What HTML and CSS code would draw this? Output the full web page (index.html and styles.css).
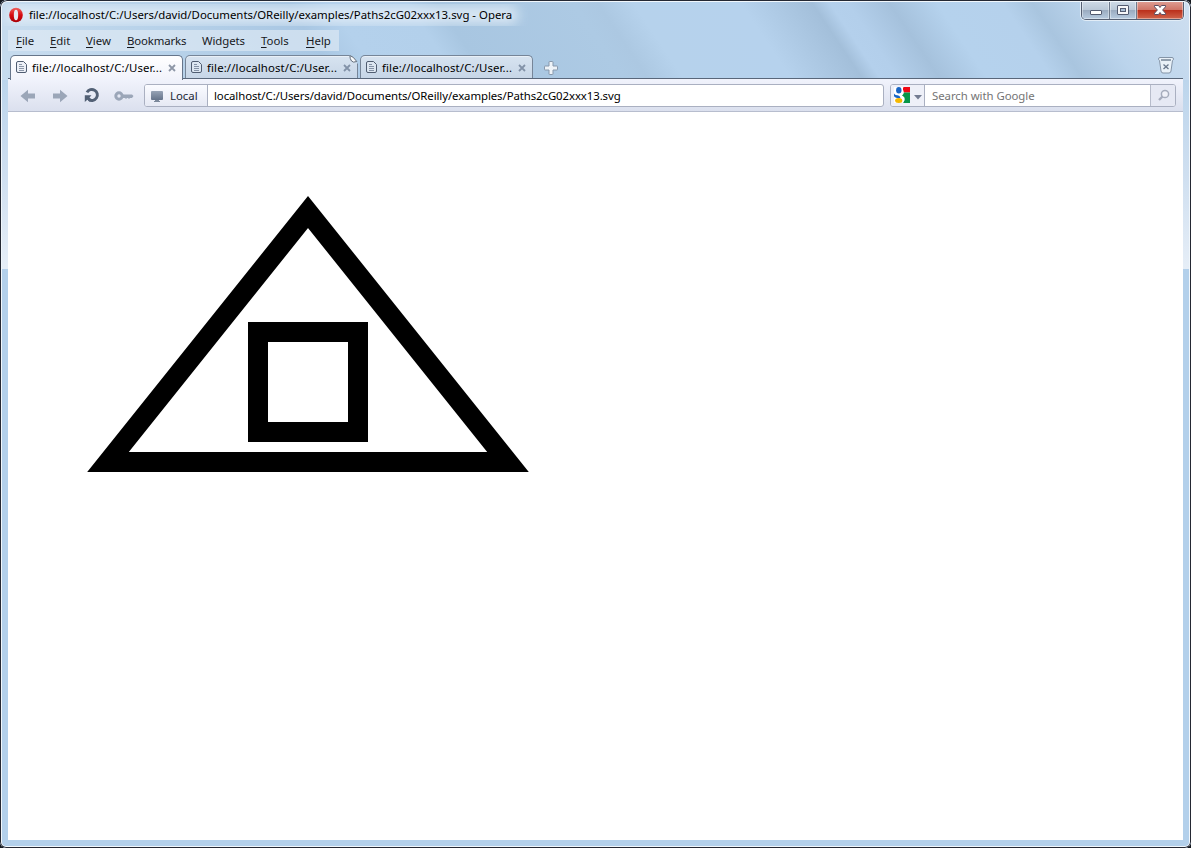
FILE: index.html
```html
<!DOCTYPE html>
<html lang="en">
<head>
<meta charset="utf-8">
<title>Paths2cG02xxx13.svg - Opera</title>
<link rel="stylesheet" href="styles.css">
</head>
<body>
<div class="window">
  <svg class="glass" width="1191" height="848" aria-hidden="true">
    <defs>
      <linearGradient id="streaks" gradientUnits="userSpaceOnUse" x1="0" y1="0" x2="1191" y2="0" gradientTransform="matrix(1 0 .67 1 0 0)">
        <stop offset="0" stop-color="#c6dbee"/>
        <stop offset=".1" stop-color="#b9d3ea"/>
        <stop offset=".24" stop-color="#a9c7e3"/>
        <stop offset=".275" stop-color="#b4d1ec"/>
        <stop offset=".34" stop-color="#b3d0eb"/>
        <stop offset=".365" stop-color="#a8c6e1"/>
        <stop offset=".48" stop-color="#adcae4"/>
        <stop offset=".5" stop-color="#acc8e2"/>
        <stop offset=".53" stop-color="#b6d2ec"/>
        <stop offset=".62" stop-color="#b6d2ed"/>
        <stop offset=".68" stop-color="#a3bfda"/>
        <stop offset=".695" stop-color="#b4d0ec"/>
        <stop offset=".71" stop-color="#b3cfeb"/>
        <stop offset=".745" stop-color="#a5c1dc"/>
        <stop offset=".785" stop-color="#b5d2ed"/>
        <stop offset=".84" stop-color="#b5d1ec"/>
        <stop offset=".865" stop-color="#a9c5df"/>
        <stop offset=".91" stop-color="#bbd4ec"/>
        <stop offset="1" stop-color="#cfdff0"/>
      </linearGradient>
      <linearGradient id="side" x1="0" y1="0" x2="0" y2="1">
        <stop offset="0" stop-color="#bcd5ec"/><stop offset=".5" stop-color="#cfdff0"/><stop offset="1" stop-color="#e6eef7"/>
      </linearGradient>
      <filter id="soft"><feGaussianBlur stdDeviation="6"/></filter>
    </defs>
    <rect width="1191" height="848" fill="#b3d0eb"/>
    <rect width="1191" height="80" fill="url(#streaks)"/>
    <rect y="80" width="8" height="189" fill="url(#side)"/>
    <rect x="1183" y="80" width="8" height="189" fill="url(#side)"/>
    <rect x="6" y="6" width="512" height="18" rx="7" fill="#e5eff8" opacity=".8" filter="url(#soft)"/>
  </svg>

  <header class="title-bar">
    <svg class="logo" width="16" height="16" viewBox="0 0 16 16">
      <defs><linearGradient id="red" x2="0" y2="1"><stop stop-color="#f1625d"/><stop offset=".5" stop-color="#d60b11"/><stop offset="1" stop-color="#a90006"/></linearGradient></defs>
      <ellipse cx="8" cy="8" rx="6.800" ry="7.300" fill="url(#red)"/>
      <ellipse cx="8" cy="8" rx="2.200" ry="5.300" fill="#e6e9f2"/>
    </svg>
    <span class="title">file://localhost/C:/Users/david/Documents/OReilly/examples/Paths2cG02xxx13.svg - Opera</span>
    <div class="controls">
      <span class="control"><svg width="14" height="12"><rect x="1.500" y="6.500" width="11" height="4" rx=".5" fill="#fff" stroke="#535b70"/></svg></span>
      <span class="control"><svg width="14" height="12"><rect x="1.500" y="1.500" width="11" height="9" rx=".5" fill="#f6f6f8" stroke="#535b70"/><rect x="4.500" y="4.500" width="5" height="3" fill="#a9bdd4" stroke="#535b70"/></svg></span>
      <span class="control close"><svg width="14" height="12"><path d="M1.500 1.500h4L7 3.500l1.500-2h4v1.300L9.600 6l2.900 3.200v1.300h-4L7 8.500l-1.500 2h-4V9.200L4.400 6 1.500 2.800z" fill="#fff" stroke="#5c4e62"/></svg></span>
    </div>
  </header>

  <nav class="menu">
    <span class="m-file"><u>F</u>ile</span><span class="m-edit"><u>E</u>dit</span><span class="m-view"><u>V</u>iew</span><span class="m-book"><u>B</u>ookmarks</span><span class="m-widg">Widgets</span><span class="m-tool"><u>T</u>ools</span><span class="m-help"><u>H</u>elp</span>
  </nav>

  <div class="tabs">
    <div class="tab active">
      <svg class="page-icon" width="13" height="14"><path d="M1.500 3q0-1.500 1.500-1.500h5.500l3 3V11q0 1.500-1.500 1.500H3Q1.500 12.500 1.500 11z" fill="#edf0f7" stroke="#505d71"/><path d="M4 4.500h3M4 6.500h5M4 8.500h5M4 10.500h5" stroke="#8c97a9"/></svg>
      <span class="tab-text">file://localhost/C:/User...</span>
      <svg class="x" width="8" height="8"><path d="M1 1l6 6M7 1L1 7" stroke="#8e97a7" stroke-width="1.800"/></svg>
    </div>
    <div class="tab">
      <svg class="page-icon" width="13" height="14"><path d="M1.500 3q0-1.500 1.500-1.500h5.500l3 3V11q0 1.500-1.500 1.500H3Q1.500 12.500 1.500 11z" fill="#dce6f1" stroke="#505d71"/><path d="M4 4.500h3M4 6.500h5M4 8.500h5M4 10.500h5" stroke="#8492a6"/></svg>
      <span class="tab-text">file://localhost/C:/User...</span>
      <svg class="x" width="8" height="8"><path d="M1 1l6 6M7 1L1 7" stroke="#8292a8" stroke-width="1.800"/></svg>
      <svg class="fold" width="9" height="9"><path d="M0 0h9v9z" fill="#b1cfe9"/><path d="M.8.500Q4 1 7.800 6.500 4 8 2.500 6T.8.500z" fill="#f8fafc" stroke="#626d7b"/></svg>
    </div>
    <div class="tab">
      <svg class="page-icon" width="13" height="14"><path d="M1.500 3q0-1.500 1.500-1.500h5.500l3 3V11q0 1.500-1.500 1.500H3Q1.500 12.500 1.500 11z" fill="#dce6f1" stroke="#505d71"/><path d="M4 4.500h3M4 6.500h5M4 8.500h5M4 10.500h5" stroke="#8492a6"/></svg>
      <span class="tab-text">file://localhost/C:/User...</span>
      <svg class="x" width="8" height="8"><path d="M1 1l6 6M7 1L1 7" stroke="#8292a8" stroke-width="1.800"/></svg>
    </div>
    <svg class="add" width="14" height="14"><path d="M5.500.500h3q.5 0 .5.500v4h4q.5 0 .5.500v3q0 .5-.5.500H9v4q0 .5-.5.500h-3q-.5 0-.5-.5V9H1Q.5 9 .5 8.500v-3Q.5 5 1 5h4V1q0-.5.500-.5z" fill="#eef3f8" stroke="#8798ac"/></svg>
    <svg class="trash" width="18" height="18"><path d="M3 .500h12q1.500 0 1.500 1.500 0 1-1 1.500L14 14q-.3 2-2 2H6q-1.700 0-2-2L2.500 3.500q-1-.5-1-1.500 0-1.500 1.500-1.500z" fill="#e9f1f8" stroke="#8494a7"/><path d="M4 3h10" stroke="#758497" stroke-width="1.500"/><path d="M6.500 7.500l5 4.500m0-4.500l-5 4.500" stroke="#68778b" stroke-width="1.300"/></svg>
  </div>

  <div class="toolbar">
    <svg class="nav-icon back" width="16" height="14"><path d="M.5 7L8 .8v3.700h7v5H8v3.700z" fill="#9ba6b8"/></svg>
    <svg class="nav-icon forward" width="16" height="14"><path d="M15.500 7L8 .8v3.700H1v5h7v3.700z" fill="#9ba6b8"/></svg>
    <svg class="nav-icon reload" width="16" height="16"><path d="M3 5.400A5.500 5.500 0 1 1 4.800 12.500" fill="none" stroke="#526075" stroke-width="2.900"/><path d="M.8 8.300h6.700L5.500 10.500l2 2-1.500 2.200-2.700-2L.8 15z" fill="#526075"/></svg>
    <svg class="nav-icon key" width="20" height="12"><path d="M8 4.500h10l1.500 1.500L18 8h-2l-1 1-1-1h-1l-1 1-1-1H8z" fill="#9ba6b8"/><circle cx="5" cy="6" r="3.200" fill="none" stroke="#9ba6b8" stroke-width="3"/></svg>
    <div class="address">
      <div class="local"><svg width="14" height="12"><defs><linearGradient id="monitor" x2="0" y2="1"><stop stop-color="#97a3b5"/><stop offset="1" stop-color="#65748a"/></linearGradient></defs><rect x="1" y="0" width="12" height="9" rx="1" fill="url(#monitor)"/><path d="M5 9h4v1h1v1H4v-1h1z" fill="#7c899c"/></svg><span class="local-text">Local</span></div>
      <span class="url">localhost/C:/Users/david/Documents/OReilly/examples/Paths2cG02xxx13.svg</span>
    </div>
    <div class="search">
      <div class="engine">
        <svg width="16" height="16"><path d="M0 0h16v16H0z" fill="#fff"/><path d="M9 0h7v5.500H9z" fill="#f00814"/><path d="M16 5.500V16H9l1-4-3-4 2.500-2.500z" fill="#079647"/><ellipse cx="4.800" cy="3.300" rx="2.700" ry="3.300" fill="#1765c5"/><path d="M0 6.500q1 2 3.500 1.700Q6 8.300 6.500 11 1 11.500 0 9z" fill="#1765c5"/><ellipse cx="4.800" cy="13.500" rx="3.700" ry="2.500" fill="#f5b800"/><path d="M7.500 0h2Q8 2 9.500 4q1 2.500-1.500 4.500 3.500 1.500 2.500 5L9 16H8q1.500-3-.8-5Q5.500 8.800 7.800 6 9 3.500 7.500 0z" fill="#fff"/></svg>
        <svg width="8" height="5"><path d="M0 0h8L4 4.500z" fill="#737c91"/></svg>
      </div>
      <span class="query">Search with Google</span>
      <div class="go"><svg width="14" height="14"><circle cx="8" cy="5" r="3.600" fill="#f0f1f8" stroke="#a6acbc" stroke-width="1.500"/><path d="M5.500 7.500L2 11" stroke="#a6acbc" stroke-width="2.300"/></svg></div>
    </div>
  </div>

  <main class="page">
    <svg width="1175" height="728"><g fill="none" stroke="#000" stroke-width="20"><path d="M100 350L300 100 500 350z"/><path d="M250 220h100v100H250z"/></g></svg>
  </main>
</div>
</body>
</html>
```
FILE: styles.css
```css
* { box-sizing: border-box; }
body {
  margin: 0;
  background: #15191f;
  font-family: "Noto Sans", "Open Sans", sans-serif;
  font-size: 11.4px;
  line-height: 16px;
  color: #000;
  white-space: nowrap;
  overflow: hidden;
}
svg { display: block; flex: none; }
.window {
  position: relative;
  width: 1191px;
  height: 848px;
  padding: 1px 8px 8px;
  border-radius: 7px 7px 6px 6px;
  overflow: hidden;
  isolation: isolate;
}
.window::after {
  content: "";
  position: absolute;
  inset: 0;
  border-radius: 7px 7px 6px 6px;
  box-shadow: inset 0 0 0 1px #242833, inset 0 0 0 2px #f1f7fc;
  pointer-events: none;
}
.glass { position: absolute; left: 0; top: 0; z-index: -1; }
.title-bar { display: flex; height: 29px; align-items: flex-start; }
.logo { margin-top: 6px; }
.title { width: 483px; margin: 6px auto 0 5px; }
.controls {
  display: flex;
  width: 103px;
  height: 19px;
  margin-right: -1px;
  border: 1px solid #555f72;
  border-top: 0;
  border-radius: 0 0 5px 5px;
  box-shadow: 0 0 0 1px #e2edf7;
  overflow: hidden;
}
.control {
  display: flex;
  width: 28px;
  align-items: center;
  justify-content: center;
  border-right: 1px solid #6e7a8c;
  background: linear-gradient(#cfdbe7, #bac8d7 48%, #9aabc0 52%, #b7cbe0);
  box-shadow: inset 0 0 0 1px rgba(255,255,255,.4);
}
.control:nth-child(2) { width: 27px; }
.close { width: 46px; border: 0; background: linear-gradient(#dfa096, #cf7567 48%, #bb301c 52%, #d0644b); }
.menu { display: flex; width: 331px; height: 21px; padding: 3px 8px; background: rgba(226,236,246,.62); color: #17191d; }
.menu u { text-underline-offset: 2px; text-decoration-thickness: 1px; }
.m-file { width: 34px; }
.m-edit { width: 36px; }
.m-view { width: 41px; }
.m-book { width: 75px; letter-spacing: -.15px; }
.m-widg { width: 59px; letter-spacing: -.1px; }
.m-tool { width: 45px; }
.tabs { display: flex; height: 28px; padding: 4px 8px 0 2px; border-bottom: 1px solid #59677a; }
.tab {
  position: relative;
  display: flex;
  width: 173px;
  height: 23px;
  margin-right: 2px;
  padding: 4px 0 0 4px;
  border: 1px solid #768598;
  border-bottom: 0;
  border-radius: 5px 5px 0 0;
  background: linear-gradient(#d7e3f0, #c7d6e7);
  box-shadow: inset 0 1px rgba(255,255,255,.45);
}
.tab.active { height: 25px; background: linear-gradient(#fff, #f1f3fb); border-color: #66758a; }
.tab-text { width: 131px; margin-left: 4px; letter-spacing: .12px; }
.x { margin: 4px 0 0 5px; }
.fold { position: absolute; right: -1px; top: -1px; }
.add { margin: 6px 0 0 9px; }
.trash { margin: 2px 0 0 auto; }
.toolbar {
  display: flex;
  height: 33px;
  padding: 5px 7px 0 12px;
  border-bottom: 1px solid #b7bdce;
  background: linear-gradient(#f1f3fc, #dbe0ee);
}
.nav-icon { margin: 5px 16px 0 0; }
.reload { margin-top: 3px; }
.key { margin: 6px 10px 0 -2px; }
.address, .search { display: flex; height: 23px; border: 1px solid #aab0c1; border-radius: 3px; background: #fff; overflow: hidden; }
.address { width: 740px; }
.local { display: flex; width: 63px; padding: 3px 0 0 5px; border-right: 1px solid #aab0c1; background: linear-gradient(#fafbff, #e6e9f4); color: #202734; }
.local svg { margin: 3px 6px 0 0; }
.url { padding: 3px 6px; letter-spacing: -.085px; }
.search { width: 286px; margin-left: 6px; }
.engine { display: flex; width: 34px; padding: 2px 0 0 3px; gap: 4px; border-right: 1px solid #aab0c1; background: #eef0f8; }
.engine svg + svg { margin-top: 8px; }
.query { width: 225px; padding: 3px 7px; color: #747474; letter-spacing: -.05px; }
.go { width: 25px; padding: 4px 6px; border-left: 1px solid #b7bccb; background: #e6e9f4; }
.page { width: 1175px; height: 728px; background: #fff; }
```
